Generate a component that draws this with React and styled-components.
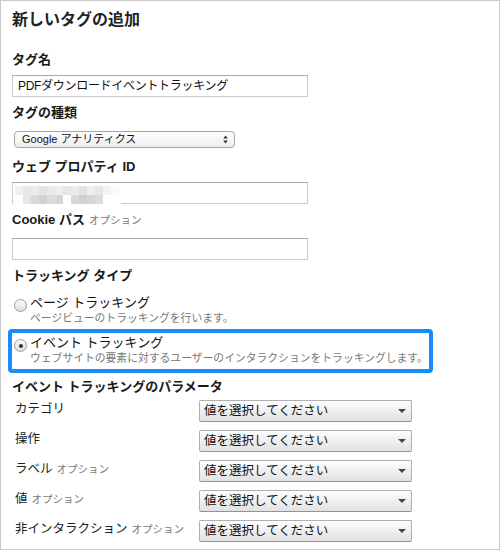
import React from "react";
import styled, { createGlobalStyle } from "styled-components";

const GlobalStyle = createGlobalStyle`
  html, body {
    margin: 0;
    padding: 0;
    background: #fff;
  }
  body {
    font-family: "Liberation Sans", "Noto Sans CJK JP", sans-serif;
    color: #222;
  }
`;

const Panel = styled.div`
  box-sizing: border-box;
  width: 500px;
  height: 550px;
  border: 1px solid #c9c9c9;
  padding: 9px 11px 0;
`;

const Title = styled.h1`
  margin: 0 0 22px;
  font-size: 16px;
  line-height: 20px;
  font-weight: bold;
  color: #222;
`;

const FieldLabel = styled.h3`
  margin: ${({ $mt }) => $mt || 0}px 0 ${({ $mb }) => $mb || 0}px;
  font-size: 13px;
  line-height: 16px;
  font-weight: bold;
  color: #1a1a1a;
`;

const Optional = styled.span`
  margin-left: 4px;
  font-size: 10.5px;
  font-weight: normal;
  color: #7a7a7a;
`;

const TextBox = styled.div`
  position: relative;
  box-sizing: border-box;
  width: 296px;
  height: 22px;
  margin-bottom: 8px;
  padding: 0 5px;
  border: 1px solid #cbcbcb;
  border-top-color: #a9a9a9;
  font-size: 12px;
  letter-spacing: -0.3px;
  line-height: 20px;
  color: #111;
  white-space: nowrap;
`;

const Mosaic = styled.div`
  position: absolute;
  left: 0;
  top: 3px;
  display: grid;
  grid-template-columns: repeat(13, 8px);
  grid-auto-rows: 9px;
  padding: 0 2px;
  background: #fff;
`;

const Cell = styled.span`
  background: ${({ $c }) => $c};
`;

const MacSelect = styled.div`
  box-sizing: border-box;
  display: flex;
  align-items: center;
  justify-content: space-between;
  width: 221px;
  height: 17px;
  margin: 0 0 11px 2px;
  padding: 0 6px 0 7px;
  border: 1px solid #a6a6a6;
  border-radius: 4px;
  background: linear-gradient(#ffffff, #ededed);
  font-size: 11px;
  line-height: 15px;
  color: #111;
`;

const Option = styled.div`
  box-sizing: border-box;
  display: grid;
  grid-template-columns: 16px 1fr;
  width: 425px;
  margin-left: -4px;
  padding: 2px 2px 4px;
  border: 4px solid ${({ $selected }) => ($selected ? "#178cfb" : "transparent")};
  border-radius: 4px;

  & + & {
    margin-top: -4px;
  }
`;

const Radio = styled.span`
  box-sizing: border-box;
  position: relative;
  width: 13px;
  height: 13px;
  margin-top: 4px;
  border: 1px solid #9c9c9c;
  border-radius: 50%;
  background: linear-gradient(#fdfdfd, #dcdcdc);

  &::after {
    content: "";
    display: ${({ $checked }) => ($checked ? "block" : "none")};
    position: absolute;
    left: 3.5px;
    top: 3.5px;
    width: 4px;
    height: 4px;
    border-radius: 50%;
    background: #333;
  }
`;

const OptionText = styled.div`
  display: flex;
  flex-direction: column;
`;

const OptionTitle = styled.span`
  font-size: 13px;
  line-height: 16px;
  color: #111;
`;

const OptionSub = styled.span`
  font-size: 10.8px;
  line-height: 14px;
  color: #777;
  white-space: nowrap;
`;

const ParamList = styled.div`
  display: flex;
  flex-direction: column;
  gap: 8px;
  padding-left: 3px;
`;

const ParamRow = styled.div`
  display: grid;
  grid-template-columns: 184px 213px;
  align-items: start;
`;

const ParamLabel = styled.span`
  font-size: 12.5px;
  line-height: 18px;
  color: #222;
  white-space: nowrap;
`;

const Dropdown = styled.div`
  box-sizing: border-box;
  display: flex;
  align-items: center;
  justify-content: space-between;
  height: 22px;
  padding: 0 5px 0 4px;
  border: 1px solid #b0b0b0;
  border-bottom-color: #939393;
  border-radius: 2px;
  background: linear-gradient(#fdfdfd, #e2e2e2);
  font-size: 12.5px;
  line-height: 20px;
  color: #111;
`;

const Caret = styled.span`
  width: 0;
  height: 0;
  border-left: 4px solid transparent;
  border-right: 4px solid transparent;
  border-top: 4px solid #3b4a63;
`;

const topRow = ["#f0f0f0", "#e8e8e8", "#ececec", "#e4e4e4", "#e9e9e9", "#eeeeee", "#e6e6e6", "#ebebeb", "#e3e3e3", "#efefef", "#e7e7e7", "#f3f3f3", "#fafafa"];
const bottomRow = ["#ffffff", "#e6e6e6", "#d9d9d9", "#d2d2d2", "#dcdcdc", "#d5d5d5", "#ffffff", "#d8d8d8", "#d0d0d0", "#d6d6d6", "#dddddd", "#ffffff", "#ffffff"];

const params = [
  { label: "カテゴリ" },
  { label: "操作" },
  { label: "ラベル", optional: true },
  { label: "値", optional: true },
  { label: "非インタラクション", optional: true },
];

const UpDown = () => (
  <svg width="5" height="9" viewBox="0 0 5 9">
    <path d="M2.5 0.5 L4.8 3.5 L0.2 3.5 Z" fill="#333" />
    <path d="M2.5 8.5 L4.8 5.5 L0.2 5.5 Z" fill="#333" />
  </svg>
);

export default function App() {
  return (
    <>
      <GlobalStyle />
      <Panel>
        <Title>新しいタグの追加</Title>

        <FieldLabel $mb={7}>タグ名</FieldLabel>
        <TextBox>PDFダウンロードイベントトラッキング</TextBox>

        <FieldLabel $mb={10}>タグの種類</FieldLabel>
        <MacSelect>
          <span>Google アナリティクス</span>
          <UpDown />
        </MacSelect>

        <FieldLabel $mb={7}>ウェブ プロパティ ID</FieldLabel>
        <TextBox>
          <Mosaic>
            {topRow.map((c, i) => (
              <Cell key={"t" + i} $c={c} />
            ))}
            {bottomRow.map((c, i) => (
              <Cell key={"b" + i} $c={c} />
            ))}
          </Mosaic>
        </TextBox>

        <FieldLabel $mb={10}>
          Cookie パス<Optional>オプション</Optional>
        </FieldLabel>
        <TextBox />

        <FieldLabel $mb={5}>トラッキング タイプ</FieldLabel>
        <Option>
          <Radio />
          <OptionText>
            <OptionTitle>ページ トラッキング</OptionTitle>
            <OptionSub>ページビューのトラッキングを行います。</OptionSub>
          </OptionText>
        </Option>
        <Option $selected>
          <Radio $checked />
          <OptionText>
            <OptionTitle>イベント トラッキング</OptionTitle>
            <OptionSub>ウェブサイトの要素に対するユーザーのインタラクションをトラッキングします。</OptionSub>
          </OptionText>
        </Option>

        <FieldLabel $mt={6} $mb={5}>イベント トラッキングのパラメータ</FieldLabel>
        <ParamList>
          {params.map((p) => (
            <ParamRow key={p.label}>
              <ParamLabel>
                {p.label}
                {p.optional && <Optional>オプション</Optional>}
              </ParamLabel>
              <Dropdown>
                <span>値を選択してください</span>
                <Caret />
              </Dropdown>
            </ParamRow>
          ))}
        </ParamList>
      </Panel>
    </>
  );
}
